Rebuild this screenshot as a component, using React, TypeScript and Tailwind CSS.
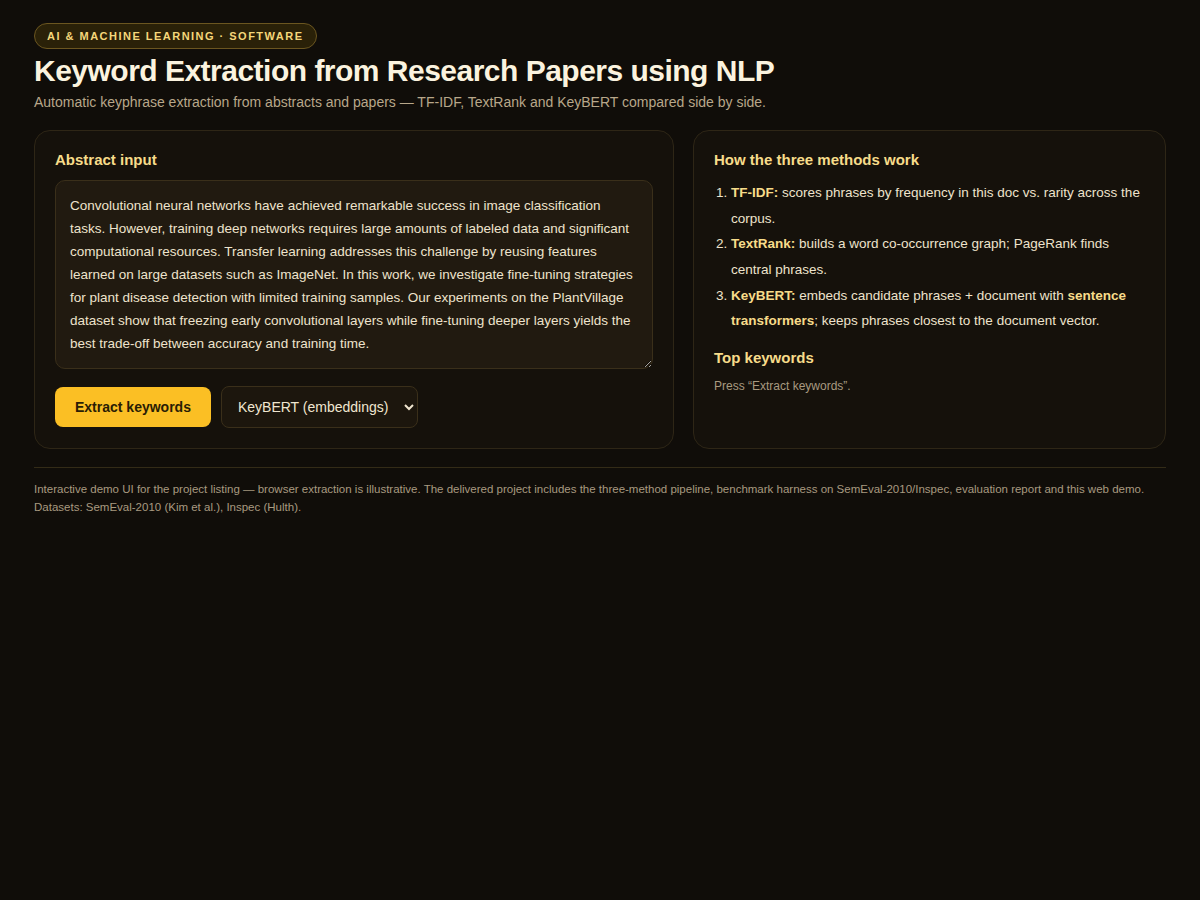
export default function App() {
    return (
        <div
            className="min-h-screen bg-[#100d09] text-[#eee3cc]"
            style={{ fontFamily: '"Liberation Sans", Arial, sans-serif' }}
        >
            <div className="px-[34px] pt-[23px] pb-10">
                {/* Header */}
                <span className="inline-flex h-[26px] items-center rounded-full border border-[#6b5620] bg-[#2a2108] px-3 text-[11px] font-bold uppercase tracking-[0.135em] text-[#f5d77a]">
                    AI &amp; Machine Learning · Software
                </span>
                <h1 className="mt-[4px] text-[30px] font-bold leading-[36px] tracking-[-0.017em] text-[#fbf3df]">
                    Keyword Extraction from Research Papers using NLP
                </h1>
                <p className="mt-[3px] text-[14px] leading-5 text-[#b8a78a]">
                    Automatic keyphrase extraction from abstracts and papers — TF-IDF, TextRank and KeyBERT compared side by side.
                </p>

                <div className="mt-[18px] grid grid-cols-[640px_1fr] gap-[19px]">
                    {/* Abstract input */}
                    <section className="rounded-2xl border border-[#2e2616] bg-[#15110b] px-5 pt-[19px] pb-5">
                        <h2 className="text-[15px] font-bold leading-5 text-[#f7dc8a]">Abstract input</h2>
                        <textarea
                            className="mt-[10px] block h-[189px] w-full resize-y rounded-[10px] border border-[#3a2f1a] bg-[#211a10] px-[14px] py-[13px] text-[13.5px] leading-[23px] text-[#eee3cc] outline-none"
                            style={{ fontFamily: 'inherit' }}
                            defaultValue="Convolutional neural networks have achieved remarkable success in image classification tasks. However, training deep networks requires large amounts of labeled data and significant computational resources. Transfer learning addresses this challenge by reusing features learned on large datasets such as ImageNet. In this work, we investigate fine-tuning strategies for plant disease detection with limited training samples. Our experiments on the PlantVillage dataset show that freezing early convolutional layers while fine-tuning deeper layers yields the best trade-off between accuracy and training time."
                        />
                        <div className="mt-[17px] flex items-center gap-[10px]">
                            <button className="h-10 rounded-lg bg-[#fbbf24] px-5 text-[14px] font-bold text-[#2a1d05]">
                                Extract keywords
                            </button>
                            <select
                                className="h-[42px] rounded-lg border border-[#3a2f1a] bg-[#1c160d] pl-3 pr-3 text-[14px] text-[#f0e6d0] outline-none"
                                style={{ fontFamily: 'inherit' }}
                                defaultValue="keybert"
                            >
                                <option value="tfidf">TF-IDF</option>
                                <option value="textrank">TextRank</option>
                                <option value="keybert">KeyBERT (embeddings)</option>
                            </select>
                        </div>
                    </section>

                    {/* Methods */}
                    <section className="rounded-2xl border border-[#2e2616] bg-[#15110b] px-5 pt-[19px] pb-5">
                        <h2 className="text-[15px] font-bold leading-5 text-[#f7dc8a]">How the three methods work</h2>
                        <ol className="mt-[10px] list-decimal pl-[17px] text-[13.5px] leading-[25.6px] text-[#eee3cc]">
                            <li>
                                <b className="text-[#f7dc8a]">TF-IDF:</b> scores phrases by frequency in this doc vs. rarity across the corpus.
                            </li>
                            <li>
                                <b className="text-[#f7dc8a]">TextRank:</b> builds a word co-occurrence graph; PageRank finds central phrases.
                            </li>
                            <li>
                                <b className="text-[#f7dc8a]">KeyBERT:</b> embeds candidate phrases + document with{' '}
                                <b className="text-[#f7dc8a]">sentence transformers</b>; keeps phrases closest to the document vector.
                            </li>
                        </ol>
                        <h2 className="mt-[14px] text-[15px] font-bold leading-5 text-[#f7dc8a]">Top keywords</h2>
                        <p className="mt-[10px] text-[12px] leading-4 text-[#a89a80]">Press “Extract keywords”.</p>
                    </section>
                </div>

                {/* Footer */}
                <footer className="mt-[18px] border-t border-[#332b17] pt-[12px] text-[11.5px] leading-[18px] text-[#a89a80]">
                    <p>
                        Interactive demo UI for the project listing — browser extraction is illustrative. The delivered project includes the three-method pipeline, benchmark harness on SemEval-2010/Inspec, evaluation report and this web demo.
                    </p>
                    <p>Datasets: SemEval-2010 (Kim et al.), Inspec (Hulth).</p>
                </footer>
            </div>
        </div>
    );
}
